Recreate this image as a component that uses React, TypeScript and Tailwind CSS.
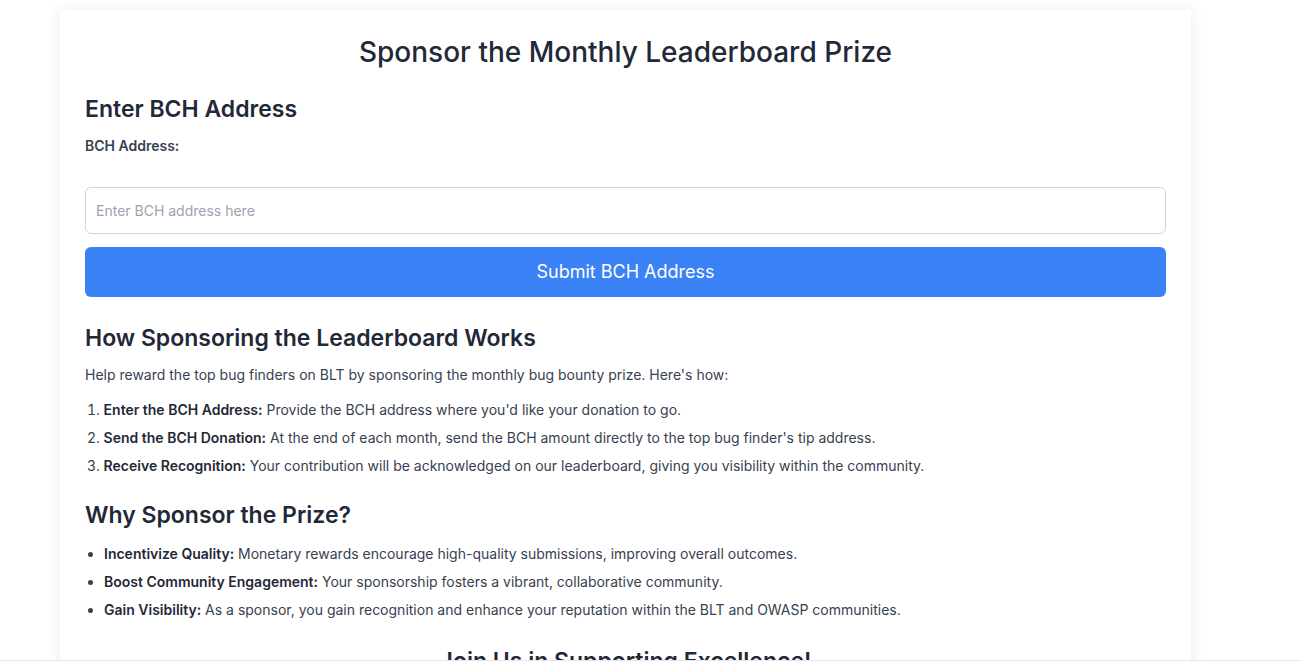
const howSteps = [
  { title: 'Enter the BCH Address:', text: "Provide the BCH address where you'd like your donation to go." },
  { title: 'Send the BCH Donation:', text: "At the end of each month, send the BCH amount directly to the top bug finder's tip address." },
  { title: 'Receive Recognition:', text: 'Your contribution will be acknowledged on our leaderboard, giving you visibility within the community.' },
]

const reasons = [
  { title: 'Incentivize Quality:', text: 'Monetary rewards encourage high-quality submissions, improving overall outcomes.' },
  { title: 'Boost Community Engagement:', text: 'Your sponsorship fosters a vibrant, collaborative community.' },
  { title: 'Gain Visibility:', text: 'As a sponsor, you gain recognition and enhance your reputation within the BLT and OWASP communities.' },
]

export default function App() {
  return (
    <div className="min-h-screen bg-white font-['Inter',sans-serif] text-[#1f2937]">
      <div className="ml-[60px] mt-[10px] w-[1131px] bg-white px-[25px] pt-[24px] pb-10 shadow-[0_0_15px_rgba(0,0,0,0.08)]">
        <h1 className="text-center text-[28px] leading-9 font-medium">Sponsor the Monthly Leaderboard Prize</h1>

        <h2 className="mt-[23px] text-[23px] leading-8 font-semibold">Enter BCH Address</h2>
        <label className="mt-[11px] block text-sm leading-5 font-semibold text-[#374151]">BCH Address:</label>
        <input
          className="mt-[31px] block h-[47px] w-full rounded-md border border-[#d1d5db] px-[10px] text-sm text-[#374151] placeholder:text-[#9ca3af] outline-none"
          placeholder="Enter BCH address here"
        />
        <button className="mt-[13px] h-[50px] w-full rounded-md bg-[#3b82f6] text-lg text-white">Submit BCH Address</button>

        <h2 className="mt-[25px] text-[23px] leading-8 font-semibold">How Sponsoring the Leaderboard Works</h2>
        <p className="mt-[11px] text-sm leading-5 text-[#374151]">
          Help reward the top bug finders on BLT by sponsoring the monthly bug bounty prize. Here's how:
        </p>
        <ol className="mt-[15px] flex list-inside list-decimal flex-col gap-2 pl-[2px] text-sm leading-5 text-[#374151]">
          {howSteps.map((s) => (
            <li key={s.title}>
              <span className="font-semibold text-[#1f2937]">{s.title}</span> {s.text}
            </li>
          ))}
        </ol>

        <h2 className="mt-[23px] text-[23px] leading-8 font-semibold">Why Sponsor the Prize?</h2>
        <ul className="mt-[13px] flex list-outside list-disc flex-col gap-2 pl-[19px] text-sm leading-5 text-[#374151]">
          {reasons.map((r) => (
            <li key={r.title}>
              <span className="font-semibold text-[#1f2937]">{r.title}</span> {r.text}
            </li>
          ))}
        </ul>

        <h2 className="mt-[25px] text-center text-[23px] leading-8 font-semibold">Join Us in Supporting Excellence!</h2>
      </div>
      <div className="fixed bottom-0 left-0 h-[9px] w-full border-t border-[#e5e7eb] bg-white" />
    </div>
  )
}
